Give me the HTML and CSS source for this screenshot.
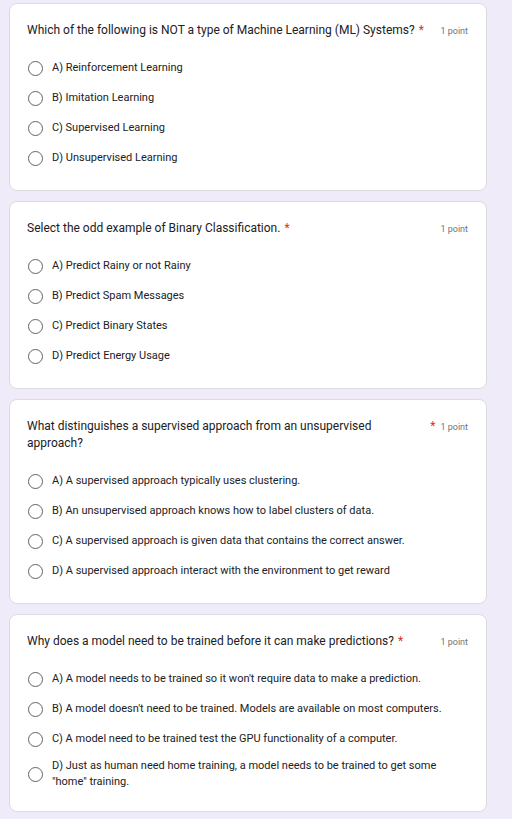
FILE: index.html
```html
<!DOCTYPE html>
<html>
<head>
<meta charset="utf-8">
<link rel="stylesheet" href="styles.css">
</head>
<body>
<div class="page">
  <div class="card">
    <div class="head">
      <div class="title"><span class="text">Which of the following is NOT a type of Machine Learning (ML) Systems?</span><span class="req">*</span></div>
      <div class="point">1 point</div>
    </div>
    <div class="options">
      <div class="opt"><span class="radio"></span><span class="label">A) Reinforcement Learning</span></div>
      <div class="opt"><span class="radio"></span><span class="label">B) Imitation Learning</span></div>
      <div class="opt"><span class="radio"></span><span class="label">C) Supervised Learning</span></div>
      <div class="opt"><span class="radio"></span><span class="label">D) Unsupervised Learning</span></div>
    </div>
  </div>
  <div class="card">
    <div class="head">
      <div class="title"><span class="text">Select the odd example of Binary Classification.</span><span class="req">*</span></div>
      <div class="point">1 point</div>
    </div>
    <div class="options">
      <div class="opt"><span class="radio"></span><span class="label">A) Predict Rainy or not Rainy</span></div>
      <div class="opt"><span class="radio"></span><span class="label">B) Predict Spam Messages</span></div>
      <div class="opt"><span class="radio"></span><span class="label">C) Predict Binary States</span></div>
      <div class="opt"><span class="radio"></span><span class="label">D) Predict Energy Usage</span></div>
    </div>
  </div>
  <div class="card">
    <div class="head">
      <div class="title"><span class="text">What distinguishes a supervised approach from an unsupervised approach?</span><span class="req">*</span></div>
      <div class="point">1 point</div>
    </div>
    <div class="options">
      <div class="opt"><span class="radio"></span><span class="label">A) A supervised approach typically uses clustering.</span></div>
      <div class="opt"><span class="radio"></span><span class="label">B) An unsupervised approach knows how to label clusters of data.</span></div>
      <div class="opt"><span class="radio"></span><span class="label">C) A supervised approach is given data that contains the correct answer.</span></div>
      <div class="opt"><span class="radio"></span><span class="label">D) A supervised approach interact with the environment to get reward</span></div>
    </div>
  </div>
  <div class="card">
    <div class="head">
      <div class="title"><span class="text">Why does a model need to be trained before it can make predictions?</span><span class="req">*</span></div>
      <div class="point">1 point</div>
    </div>
    <div class="options">
      <div class="opt"><span class="radio"></span><span class="label">A) A model needs to be trained so it won't require data to make a prediction.</span></div>
      <div class="opt"><span class="radio"></span><span class="label">B) A model doesn't need to be trained. Models are available on most computers.</span></div>
      <div class="opt"><span class="radio"></span><span class="label">C) A model need to be trained test the GPU functionality of a computer.</span></div>
      <div class="opt"><span class="radio"></span><span class="label">D) Just as human need home training, a model needs to be trained to get some "home" training.</span></div>
    </div>
  </div>
</div>
</body>
</html>
```

FILE: styles.css
```css
* { box-sizing: border-box; }
html, body {
  margin: 0;
  padding: 0;
  background: #f0ebf8;
}
body {
  font-family: Roboto, "Liberation Sans", Arial, sans-serif;
  color: #202124;
}
.page {
  width: 478px;
  margin-left: 9px;
  padding-top: 3px;
  display: flex;
  flex-direction: column;
  gap: 10px;
}
.card {
  background: #fff;
  border: 1px solid #dadce0;
  border-radius: 8px;
  padding: 18px 18px 17px 17px;
}
.head {
  display: flex;
  align-items: flex-start;
  font-size: 12px;
  line-height: 17px;
}
.title {
  display: flex;
  align-items: flex-start;
  flex: 0 1 auto;
  min-width: 0;
}
.text {
  flex: 0 1 auto;
}
.req {
  color: #d93025;
  margin-left: 4px;
  flex: none;
}
.point {
  flex: none;
  margin-left: auto;
  padding-left: 5px;
  font-size: 9px;
  color: #70757a;
  line-height: 17px;
  position: relative;
  top: 1px;
}
.options {
  margin-top: 14px;
  display: flex;
  flex-direction: column;
}
.opt {
  display: flex;
  align-items: center;
  min-height: 30px;
  font-size: 11px;
  line-height: 16px;
}
.radio {
  flex: none;
  width: 15px;
  height: 15px;
  border: 1.5px solid #5f6368;
  border-radius: 50%;
  margin-left: 1px;
  margin-right: 9px;
}
.label {
  flex: 1 1 auto;
  padding: 4px 0;
}
```
